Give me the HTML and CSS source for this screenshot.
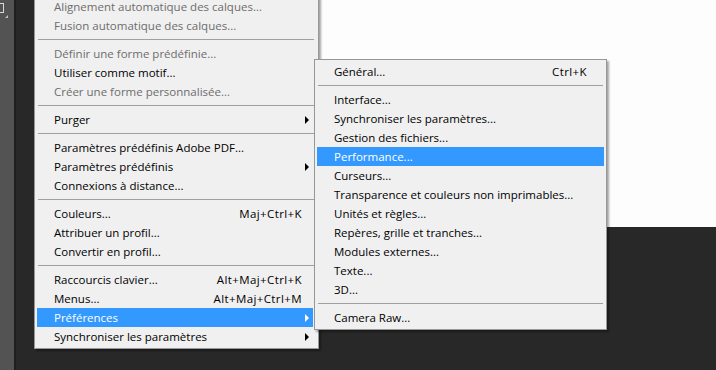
FILE: index.html
```html
<!DOCTYPE html>
<html lang="fr">
<head>
    <meta charset="UTF-8">
    <title>Menu Édition</title>
    <link rel="stylesheet" href="styles.css">
</head>
<body>
    <div class="app">
        <div class="toolbar">
            <span class="tool-icon"></span>
            <span class="tool-corner"></span>
        </div>
        <div class="workspace">
            <div class="canvas"></div>

            <!-- menu principal -->
            <div class="menu main-menu">
                <div class="item disabled">Alignement automatique des calques...</div>
                <div class="item disabled">Fusion automatique des calques...</div>
                <div class="sep"></div>
                <div class="item disabled">Définir une forme prédéfinie...</div>
                <div class="item">Utiliser comme motif...</div>
                <div class="item disabled">Créer une forme personnalisée...</div>
                <div class="sep"></div>
                <div class="item">Purger<span class="arrow"></span></div>
                <div class="sep"></div>
                <div class="item">Paramètres prédéfinis Adobe PDF...</div>
                <div class="item">Paramètres prédéfinis<span class="arrow"></span></div>
                <div class="item">Connexions à distance...</div>
                <div class="sep"></div>
                <div class="item">Couleurs...<span class="shortcut">Maj+Ctrl+K</span></div>
                <div class="item">Attribuer un profil...</div>
                <div class="item">Convertir en profil...</div>
                <div class="sep"></div>
                <div class="item">Raccourcis clavier...<span class="shortcut">Alt+Maj+Ctrl+K</span></div>
                <div class="item">Menus...<span class="shortcut">Alt+Maj+Ctrl+M</span></div>
                <div class="item active">Préférences<span class="arrow"></span></div>
                <div class="item">Synchroniser les paramètres<span class="arrow"></span></div>
            </div>

            <!-- sous-menu Préférences -->
            <div class="menu sub-menu">
                <div class="item">Général...<span class="shortcut">Ctrl+K</span></div>
                <div class="sep"></div>
                <div class="item">Interface...</div>
                <div class="item">Synchroniser les paramètres...</div>
                <div class="item">Gestion des fichiers...</div>
                <div class="item active">Performance...</div>
                <div class="item">Curseurs...</div>
                <div class="item">Transparence et couleurs non imprimables...</div>
                <div class="item">Unités et règles...</div>
                <div class="item">Repères, grille et tranches...</div>
                <div class="item">Modules externes...</div>
                <div class="item">Texte...</div>
                <div class="item">3D...</div>
                <div class="sep"></div>
                <div class="item">Camera Raw...</div>
            </div>
        </div>
    </div>
</body>
</html>
```

FILE: styles.css
```css
body {
    margin: 0;
    background-color: #282828;
    font-family: 'Segoe UI', 'Open Sans', sans-serif;
    font-size: 11.5px;
    overflow: hidden;
}

.app {
    display: flex;
    width: 716px;
    height: 370px;
}

.toolbar {
    position: relative;
    width: 14px;
    flex-shrink: 0;
    background-color: #535353;
    border-right: 2px solid #1f1f1f;
}

.tool-icon {
    position: absolute;
    left: -4px;
    top: 3px;
    width: 6px;
    height: 8px;
    border: 1px solid #d8d8d8;
}

.tool-corner {
    position: absolute;
    left: 5px;
    top: 15px;
    width: 0;
    height: 0;
    border-left: 3px solid transparent;
    border-bottom: 3px solid #bdbdbd;
}

.workspace {
    position: relative;
    flex: 1;
}

.canvas {
    margin-left: 280px;
    height: 227px;
    background-color: #fdfdfd;
}

/* menus */
.menu {
    position: absolute;
    box-sizing: border-box;
    background-color: #f0f0f0;
    border: 1px solid #979797;
    padding: 2px;
    box-shadow: 2px 2px 2px rgba(0, 0, 0, 0.35);
}

.main-menu {
    left: 18px;
    top: -6px;
    width: 285px;
    padding-right: 5px;
}

.sub-menu {
    left: 298px;
    top: 59px;
    width: 293px;
}

.item {
    display: flex;
    align-items: center;
    height: 19px;
    padding-left: 17px;
    padding-right: 4px;
    color: #000;
    white-space: nowrap;
}

.item.disabled {
    color: #6d6d6d;
}

.item.active {
    background-color: #3399ff;
    color: #fff;
}

.shortcut {
    margin-left: auto;
    margin-right: 7px;
    letter-spacing: 0.4px;
}

.sub-menu .shortcut {
    margin-right: 13px;
}

.arrow {
    margin-left: auto;
    width: 0;
    height: 0;
    border-left: 4px solid #000;
    border-top: 4px solid transparent;
    border-bottom: 4px solid transparent;
}

.item.active .arrow {
    border-left-color: #fff;
}

.sep {
    height: 4px;
    margin: 0 -1px 4px 1px;
    border-bottom: 1px solid #a0a0a0;
}

.sub-menu .sep {
    margin: 0 1px 4px 1px;
}
```
